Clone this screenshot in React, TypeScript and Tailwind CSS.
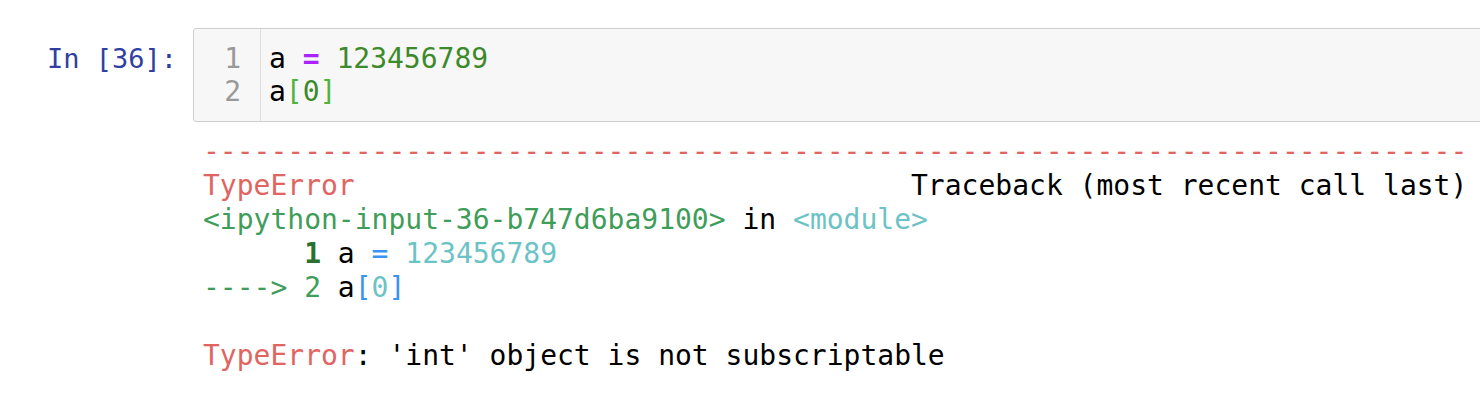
const mono = "font-['DejaVu_Sans_Mono',Menlo,monospace]";

const Traceback = () => {
  const red = "text-[#e06560]";
  const green = "text-[#3f9d5a]";
  const cyan = "text-[#6cc3c5]";
  const blue = "text-[#3a93f3]";

  return (
    <pre className={`${mono} text-[28px] leading-[34px] text-black whitespace-pre pl-[10px] pt-[13px]`}>
      <div className={red}>{"-".repeat(75)}</div>
      <div>
        <span className={red}>TypeError</span>
        {" ".repeat(33)}Traceback (most recent call last)
      </div>
      <div>
        <span className={green}>{"<ipython-input-36-b747d6ba9100>"}</span> in{" "}
        <span className={cyan}>{"<module>"}</span>
      </div>
      <div>
        {"      "}
        <span className="font-bold text-[#2a702e]">1</span> a <span className={blue}>=</span>{" "}
        <span className={cyan}>123456789</span>
      </div>
      <div>
        <span className={green}>{"----> 2"}</span> a<span className={blue}>[</span>
        <span className={cyan}>0</span>
        <span className={blue}>]</span>
      </div>
      <div>{" "}</div>
      <div>
        <span className={red}>TypeError</span>: 'int' object is not subscriptable
      </div>
    </pre>
  );
};

export default function App() {
  return (
    <div className="w-[1480px] h-[420px] overflow-hidden bg-white">
      <div className="flex pt-[28px]">
        {/* Prompt */}
        <div
          className={`${mono} w-[193px] shrink-0 text-right pr-[16px] pt-[14px] text-[27px] leading-[33px] text-[#303f9f]`}
        >
          In [36]:
        </div>

        <div className="flex flex-col shrink-0">
          {/* Input cell */}
          <div className="flex w-[1320px] border border-[#cfcfcf] rounded-[3px] bg-[#f7f7f7]">
            <div
              className={`${mono} w-[67px] shrink-0 border-r border-[#dddddd] text-right pr-[19px] py-[13px] text-[28px] leading-[33px] text-[#999999]`}
            >
              <div>1</div>
              <div>2</div>
            </div>
            <div className={`${mono} pl-[8px] py-[13px] text-[28px] leading-[33px] text-black whitespace-pre`}>
              <div>
                a <span className="font-bold text-[#aa22ff]">=</span>{" "}
                <span className="text-[#3c8a2a]">123456789</span>
              </div>
              <div>
                a<span className="text-[#4fb43c]">[</span>
                <span className="text-[#3c8a2a]">0</span>
                <span className="text-[#4fb43c]">]</span>
              </div>
            </div>
          </div>

          {/* Output */}
          <Traceback />
        </div>
      </div>
    </div>
  );
}
